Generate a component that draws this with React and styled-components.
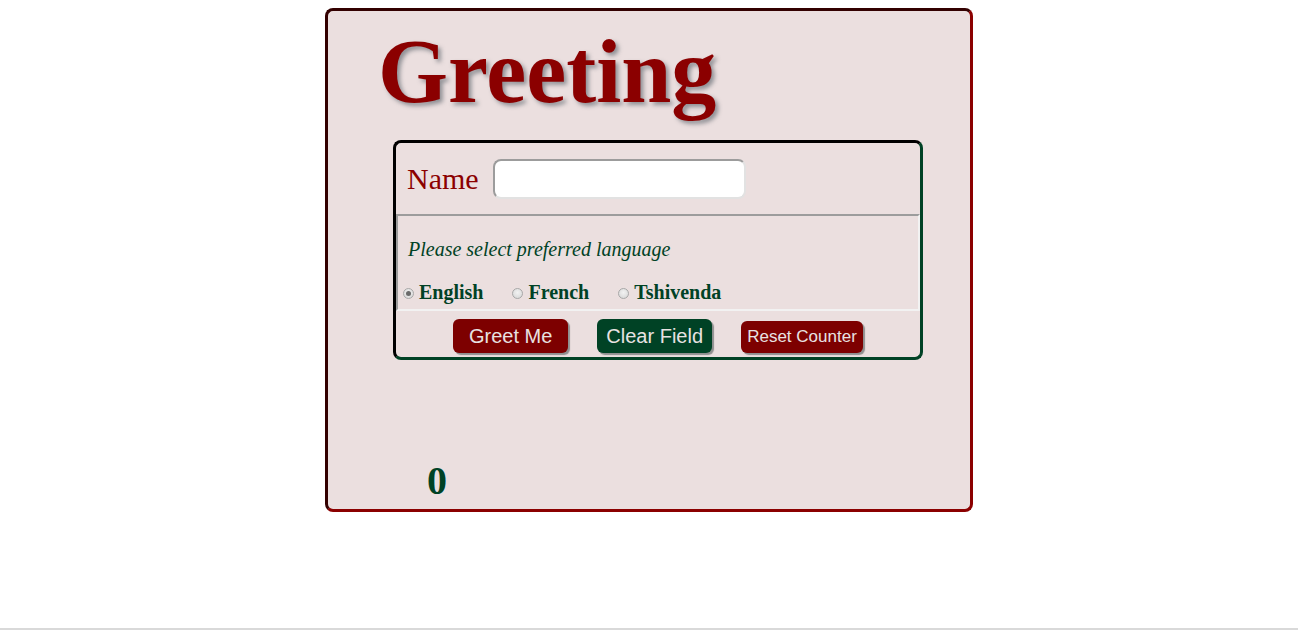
import React, { useState } from 'react';
import styled, { createGlobalStyle } from 'styled-components';

const GlobalStyle = createGlobalStyle`
  html {
    min-height: 100%;
    box-sizing: border-box;
    border-bottom: 2px solid #d9d9d9;
  }
  body {
    margin: 8px;
    font-family: 'Liberation Serif', 'Times New Roman', serif;
    background: #fff;
  }
`;

const Card = styled.div`
  box-sizing: border-box;
  width: 648px;
  margin: 0 auto;
  padding-bottom: 5px;
  background: #ebdfdf;
  border: 3px solid;
  border-color: #330000 #8b0000 #8b0000 #330000;
  border-radius: 8px;
`;

const Title = styled.h1`
  margin: 11px 0 18px 50px;
  font-size: 90px;
  line-height: 100px;
  font-weight: bold;
  color: #8b0000;
  text-shadow: 3px 3px 4px rgba(70, 80, 90, 0.55);
`;

const Panel = styled.div`
  box-sizing: border-box;
  width: 530px;
  margin-left: 65px;
  border: 3px solid;
  border-color: #000 #004225 #004225 #000;
  border-radius: 8px;
`;

const NameRow = styled.div`
  display: flex;
  align-items: center;
  padding: 16px 11px 15px;
`;

const NameLabel = styled.label`
  font-size: 30px;
  color: #8b0000;
  margin-right: 14px;
`;

const NameInput = styled.input`
  box-sizing: border-box;
  width: 253px;
  height: 40px;
  padding: 0 8px;
  font-size: 18px;
  background: #fff;
  border: 2px solid;
  border-color: #9c9c9c #e2e2e2 #e2e2e2 #9c9c9c;
  border-radius: 8px;
  outline: none;
`;

const LangSet = styled.fieldset`
  margin: 0;
  padding: 22px 0 5px;
  border: 2px solid;
  border-color: #9c9c9c #f2f2f2 #f2f2f2 #9c9c9c;
  border-radius: 0;
`;

const Prompt = styled.p`
  margin: 0 0 20px 10px;
  font-size: 20px;
  line-height: 23px;
  font-style: italic;
  color: #004225;
`;

const Options = styled.div`
  display: flex;
  align-items: center;
  gap: 29px;
  padding-left: 5px;
`;

const Option = styled.label`
  display: flex;
  align-items: center;
  font-size: 20px;
  line-height: 23px;
  font-weight: bold;
  color: #004225;
`;

const Radio = styled.input`
  appearance: none;
  box-sizing: border-box;
  width: 11px;
  height: 11px;
  margin: 2px 5px 0 0;
  border: 1px solid #a8a8a8;
  border-radius: 50%;
  background: radial-gradient(circle at 50% 40%, #f2f2f2, #d4d4d4);
  display: grid;
  place-items: center;
  &:checked::after {
    content: '';
    width: 5px;
    height: 5px;
    border-radius: 50%;
    background: #6a6a6a;
  }
`;

const Actions = styled.div`
  display: flex;
  justify-content: center;
  align-items: flex-end;
  gap: 29px;
  padding: 8px 0 4px;
`;

const Button = styled.button`
  box-sizing: border-box;
  width: ${(p) => (p.$small ? 'auto' : '115px')};
  height: ${(p) => (p.$small ? '32px' : '34px')};
  padding: ${(p) => (p.$small ? '0 6px' : '0')};
  font-family: 'Liberation Sans', Arial, sans-serif;
  font-size: ${(p) => (p.$small ? '17px' : '20px')};
  color: #e8e2e2;
  background: ${(p) => (p.$green ? '#004225' : '#7d0000')};
  border: none;
  border-radius: 6px;
  box-shadow: 2px 2px 1px #8f8f8f;
  cursor: pointer;
`;

const Message = styled.div`
  min-height: 98px;
`;

const Counter = styled.div`
  margin-left: 99px;
  font-size: 40px;
  line-height: 46px;
  font-weight: bold;
  color: #004225;
`;

const languages = ['English', 'French', 'Tshivenda'];

export default function App() {
  const [name, setName] = useState('');
  const [lang, setLang] = useState('English');
  const [count, setCount] = useState(0);
  const [message, setMessage] = useState('');

  const greet = () => {
    if (!name.trim()) return;
    const word = { English: 'Hello', French: 'Bonjour', Tshivenda: 'Ndaa' }[lang];
    setMessage(`${word}, ${name}`);
    setCount(count + 1);
  };

  return (
    <>
      <GlobalStyle />
      <Card>
        <Title>Greeting</Title>
        <Panel>
          <NameRow>
            <NameLabel htmlFor='name'>Name</NameLabel>
            <NameInput
              id='name'
              type='text'
              value={name}
              onChange={(e) => setName(e.target.value)}
            />
          </NameRow>
          <LangSet>
            <Prompt>Please select preferred language</Prompt>
            <Options>
              {languages.map((l) => (
                <Option key={l}>
                  <Radio
                    type='radio'
                    name='language'
                    checked={lang === l}
                    onChange={() => setLang(l)}
                  />
                  {l}
                </Option>
              ))}
            </Options>
          </LangSet>
          <Actions>
            <Button type='button' onClick={greet}>
              Greet Me
            </Button>
            <Button type='button' $green onClick={() => setName('')}>
              Clear Field
            </Button>
            <Button
              type='button'
              $small
              onClick={() => {
                setCount(0);
                setMessage('');
              }}
            >
              Reset Counter
            </Button>
          </Actions>
        </Panel>
        <Message>{message}</Message>
        <Counter>{count}</Counter>
      </Card>
    </>
  );
}
